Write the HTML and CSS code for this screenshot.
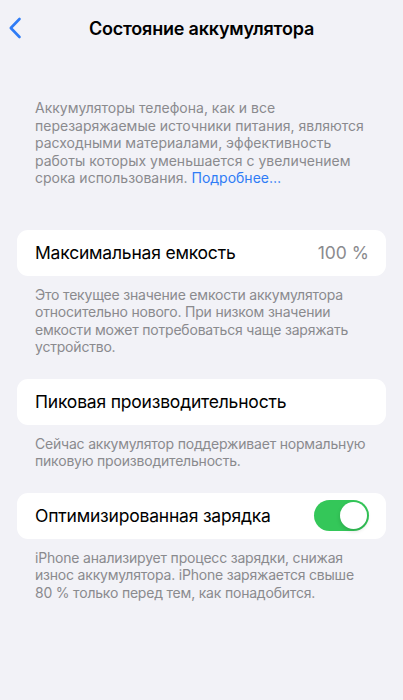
FILE: index.html
```html
<!DOCTYPE html>
<html lang="ru">
<head>
    <meta charset="UTF-8">
    <meta name="viewport" content="width=device-width, initial-scale=1.0">
    <title>Состояние аккумулятора</title>
    <link rel="stylesheet" href="styles.css">
</head>
<body>

    <!-- Навигация -->
    <header class="navbar">
        <button class="back-button" aria-label="Назад">
            <svg width="14" height="22" viewBox="0 0 14 22">
                <path d="M11.5 2 L2.8 11 L11.5 20" fill="none" stroke="#2f7cf6" stroke-width="2.6" stroke-linecap="round" stroke-linejoin="round"/>
            </svg>
        </button>
        <h1 class="title">Состояние аккумулятора</h1>
    </header>

    <main class="content">
        <p class="intro">Аккумуляторы телефона, как и все перезаряжаемые источники питания, являются расходными материалами, эффективность работы которых уменьшается с увеличением срока использования. <a href="#" class="link">Подробнее…</a></p>

        <!-- Максимальная емкость -->
        <section class="group">
            <div class="cell">
                <span class="cell-label">Максимальная емкость</span>
                <span class="cell-value">100&nbsp;%</span>
            </div>
            <p class="footer">Это текущее значение емкости аккумулятора относительно нового. При низком значении емкости может потребоваться чаще заряжать устройство.</p>
        </section>

        <!-- Пиковая производительность -->
        <section class="group">
            <div class="cell">
                <span class="cell-label">Пиковая производительность</span>
            </div>
            <p class="footer">Сейчас аккумулятор поддерживает нормальную пиковую производительность.</p>
        </section>

        <!-- Оптимизированная зарядка -->
        <section class="group">
            <div class="cell">
                <span class="cell-label">Оптимизированная зарядка</span>
                <span class="switch on"><span class="knob"></span></span>
            </div>
            <p class="footer">iPhone анализирует процесс зарядки, снижая износ аккумулятора. iPhone заряжается свыше 80&nbsp;% только перед тем, как понадобится.</p>
        </section>
    </main>

</body>
</html>
```

FILE: styles.css
```css
/* Algemeen */
body {
    font-family: Inter, "Noto Sans", sans-serif;
    background-color: #f2f2f7;
    margin: 0;
    padding: 0;
    color: #000;
}

/* Navigatiebalk */
.navbar {
    display: flex;
    align-items: center;
    justify-content: center;
    height: 56px;
    position: relative;
}

.back-button {
    position: absolute;
    left: 8px;
    top: 17px;
    background: none;
    border: none;
    padding: 0;
    cursor: pointer;
}

.title {
    margin: 0;
    font-size: 18px;
    font-weight: 600;
    letter-spacing: -0.2px;
}

/* Inhoud */
.content {
    padding: 43px 17px 0;
}

.intro {
    margin: 0 0 43px;
    padding: 0 18px;
    font-size: 14px;
    line-height: 17.5px;
    color: #8a8a8e;
}

.link {
    color: #2f7cf6;
    text-decoration: none;
}

.group {
    margin-bottom: 23px;
}

.cell {
    display: flex;
    align-items: center;
    justify-content: space-between;
    background-color: #fff;
    border-radius: 11px;
    height: 46px;
    padding: 0 17px 0 18px;
}

.cell-label {
    font-size: 17.5px;
    letter-spacing: -0.2px;
}

.cell-value {
    font-size: 17.5px;
    color: #8a8a8e;
}

.footer {
    margin: 0;
    padding: 10px 15px 0 18px;
    font-size: 14px;
    line-height: 17.5px;
    letter-spacing: -0.2px;
    color: #8a8a8e;
}

/* Schakelaar */
.switch {
    display: flex;
    align-items: center;
    width: 55px;
    height: 31px;
    border-radius: 16px;
    background-color: #e9e9ea;
    padding: 2px;
    box-sizing: border-box;
}

.switch.on {
    background-color: #34c759;
    justify-content: flex-end;
}

.knob {
    width: 27px;
    height: 27px;
    border-radius: 50%;
    background-color: #fff;
    box-shadow: 0 2px 4px rgba(0, 0, 0, 0.15);
}
```
